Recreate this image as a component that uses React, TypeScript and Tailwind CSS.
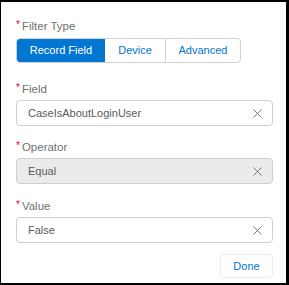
import { X } from "lucide-react";

const font = { fontFamily: "'Liberation Sans', Arial, sans-serif" };

function Label({ text }: { text: string }) {
  return (
    <div className="flex items-center h-4 text-[11.5px] leading-4 text-[#707070]">
      <span className="text-[#d9001b] text-[10px] mr-[2px] -mt-[3px]">*</span>
      {text}
    </div>
  );
}

function Input({ value, disabled }: { value: string; disabled?: boolean }) {
  return (
    <div
      className={
        "mt-[3px] h-[26px] rounded-[4px] border border-[#cfcfcf] flex items-center pl-[11px] pr-[7px] " +
        (disabled ? "bg-[#ecebea]" : "bg-white")
      }
    >
      <span className="flex-1 text-[11px] text-[#5a5a5a]">{value}</span>
      <X className="w-[15px] h-[15px] text-[#747474]" strokeWidth={1.6} />
    </div>
  );
}

export default function App() {
  return (
    <div
      className="w-[289px] h-[285px] bg-black border-l border-t-2 border-r-[3px] border-b-2 border-black"
      style={font}
    >
      <div className="w-full h-full bg-white pl-[15px] pr-[13px] pt-[16px]">
        <Label text="Filter Type" />
        <div className="mt-[4px] flex h-[25px] w-[225px] rounded-[4px] border border-[#d2d2d2] overflow-hidden text-[11px]">
          <div className="w-[88px] bg-[#0176d3] text-white flex items-center justify-center">
            Record Field
          </div>
          <div className="w-[61px] text-[#0176d3] flex items-center justify-center border-r border-[#d2d2d2]">
            Device
          </div>
          <div className="flex-1 text-[#0176d3] flex items-center justify-center">
            Advanced
          </div>
        </div>

        <div className="mt-[18px]">
          <Label text="Field" />
          <Input value="CaseIsAboutLoginUser" />
        </div>

        <div className="mt-[13px]">
          <Label text="Operator" />
          <Input value="Equal" disabled />
        </div>

        <div className="mt-[14px]">
          <Label text="Value" />
          <Input value="False" />
        </div>

        <div className="mt-[11px] flex justify-end">
          <div className="w-[53px] h-[24px] rounded-[4px] border border-[#ebebeb] flex items-center justify-center text-[11px] text-[#0176d3]">
            Done
          </div>
        </div>
      </div>
    </div>
  );
}
